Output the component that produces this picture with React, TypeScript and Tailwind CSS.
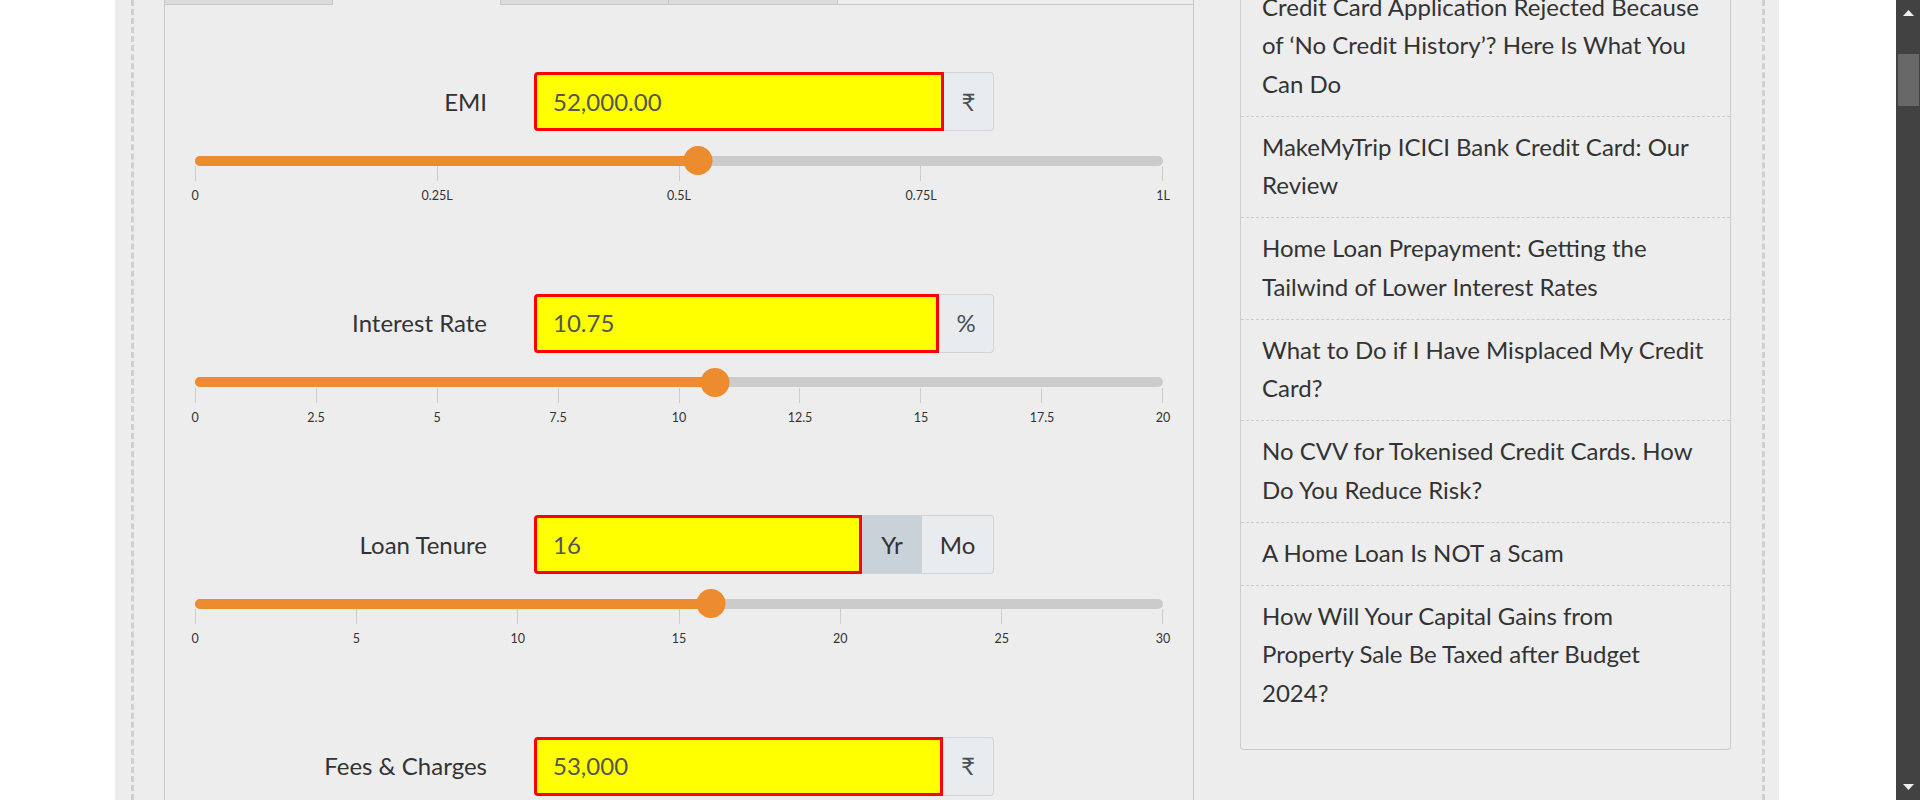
import React from "react";

type Tick = { v: number; label: string };

function Slider({ min, max, value, ticks }: { min: number; max: number; value: number; ticks: Tick[] }) {
  const pct = ((value - min) / (max - min)) * 100;
  return (
    <div className="relative mt-[15px] h-[60px]">
      <div className="absolute left-0 right-0 top-[9.5px] h-[10px] rounded-full bg-[#cbcbcb]" />
      <div className="absolute left-0 top-[9.5px] h-[10px] rounded-full bg-[#ec8c2f]" style={{ width: pct + "%" }} />
      {ticks.map((t) => {
        const p = ((t.v - min) / (max - min)) * 100;
        return (
          <React.Fragment key={t.label}>
            <div
              className="absolute top-[20px] h-[15px] w-px bg-[#cccccc]"
              style={{ left: `calc(${p}% - ${p / 100}px)` }}
            />
            <div
              className="absolute top-[42px] -translate-x-1/2 whitespace-nowrap text-[12.5px] leading-[15px] text-[#333333]"
              style={{ left: p + "%" }}
            >
              {t.label}
            </div>
          </React.Fragment>
        );
      })}
      <div
        className="absolute top-0 h-[29px] w-[29px] -translate-x-1/2 rounded-full bg-[#ec8c2f]"
        style={{ left: pct + "%" }}
      />
    </div>
  );
}

function Row({
  label,
  value,
  addon,
  slider,
}: {
  label: string;
  value: string;
  addon: React.ReactNode;
  slider?: React.ReactNode;
}) {
  return (
    <div className="h-[221.5px]">
      <div className="flex h-[59px] items-center">
        <div className="w-[292px] text-right text-[24px] text-[#333333]">{label}</div>
        <div className="ml-[47px] flex h-full w-[460px]">
          <div className="flex flex-1 items-center rounded-l-[4px] border-[3px] border-[#ff0000] bg-[#ffff00] pl-[16px] text-[24px] text-[#555555]">
            {value}
          </div>
          {addon}
        </div>
      </div>
      {slider}
    </div>
  );
}

function Addon({ text, w }: { text: string; w: string }) {
  return (
    <div
      className={`flex ${w} items-center justify-center rounded-r-[4px] border border-l-0 border-[#ced4da] bg-[#e9ecef] text-[24px] text-[#495057]`}
    >
      {text}
    </div>
  );
}

const articles: string[][] = [
  ["Credit Card Application Rejected Because", "of \u2018No Credit History\u2019? Here Is What You", "Can Do"],
  ["MakeMyTrip ICICI Bank Credit Card: Our", "Review"],
  ["Home Loan Prepayment: Getting the", "Tailwind of Lower Interest Rates"],
  ["What to Do if I Have Misplaced My Credit", "Card?"],
  ["No CVV for Tokenised Credit Cards. How", "Do You Reduce Risk?"],
  ["A Home Loan Is NOT a Scam"],
  ["How Will Your Capital Gains from", "Property Sale Be Taxed after Budget", "2024?"],
];

export default function App() {
  return (
    <div className="flex h-[800px] w-[1920px] overflow-hidden bg-white [font-family:Lato,'Noto_Sans',sans-serif]">
      <div className="ml-[115px] w-[1664px] shrink-0 bg-[#ededed] pl-[16px] pr-[14px]">
        <div className="flex h-full border-x-[3px] border-dashed border-[#d0d0d0] pl-[30px] pr-[31px]">
          {/* Calculator column */}
          <div className="-mt-[40px] w-[1030px] shrink-0">
            <div className="flex h-[45px]">
              <div className="w-[169px] border border-[#c8c8c8] bg-[#dcdcdc]" />
              <div className="w-[167px]" />
              <div className="w-[169px] border border-[#c8c8c8] bg-[#dcdcdc]" />
              <div className="w-[169px] border-y border-r border-[#c8c8c8] bg-[#dcdcdc]" />
              <div className="flex-1 border-b border-r border-[#c8c8c8]" />
            </div>
            <div className="border-x border-[#c8c8c8] bg-[#ededed] px-[30px] pt-[67px]">
              <Row
                label="EMI"
                value="52,000.00"
                addon={<Addon text="₹" w="w-[50px]" />}
                slider={
                  <Slider
                    min={0}
                    max={100000}
                    value={52000}
                    ticks={[
                      { v: 0, label: "0" },
                      { v: 25000, label: "0.25L" },
                      { v: 50000, label: "0.5L" },
                      { v: 75000, label: "0.75L" },
                      { v: 100000, label: "1L" },
                    ]}
                  />
                }
              />
              <Row
                label="Interest Rate"
                value="10.75"
                addon={<Addon text="%" w="w-[55px]" />}
                slider={
                  <Slider
                    min={0}
                    max={20}
                    value={10.75}
                    ticks={[
                      { v: 0, label: "0" },
                      { v: 2.5, label: "2.5" },
                      { v: 5, label: "5" },
                      { v: 7.5, label: "7.5" },
                      { v: 10, label: "10" },
                      { v: 12.5, label: "12.5" },
                      { v: 15, label: "15" },
                      { v: 17.5, label: "17.5" },
                      { v: 20, label: "20" },
                    ]}
                  />
                }
              />
              <Row
                label="Loan Tenure"
                value="16"
                addon={
                  <div className="flex text-[24px] text-[#333333]">
                    <div className="flex w-[60px] items-center justify-center border-y border-[#ced4da] bg-[#c9d1d9]">
                      Yr
                    </div>
                    <div className="flex w-[72px] items-center justify-center rounded-r-[4px] border border-l-0 border-[#ced4da] bg-[#e9ecef]">
                      Mo
                    </div>
                  </div>
                }
                slider={
                  <Slider
                    min={0}
                    max={30}
                    value={16}
                    ticks={[
                      { v: 0, label: "0" },
                      { v: 5, label: "5" },
                      { v: 10, label: "10" },
                      { v: 15, label: "15" },
                      { v: 20, label: "20" },
                      { v: 25, label: "25" },
                      { v: 30, label: "30" },
                    ]}
                  />
                }
              />
              <Row label="Fees & Charges" value="53,000" addon={<Addon text="₹" w="w-[51px]" />} />
            </div>
          </div>

          {/* Sidebar */}
          <div className="-mt-[23px] ml-[46px] w-[491px] shrink-0 self-start">
            <div className="rounded-b-[4px] border-x border-b border-[#cccccc] pb-[24px]">
              {articles.map((lines, i) => (
                <div
                  key={i}
                  className={`whitespace-nowrap pb-[13px] pl-[21px] pr-[10px] pt-[11px] text-[24px] leading-[38.25px] text-[#333333] ${
                    i < articles.length - 1 ? "border-b border-dashed border-[#cccccc]" : ""
                  }`}
                >
                  {lines.map((l, j) => (
                    <React.Fragment key={j}>
                      {j > 0 && <br />}
                      {l}
                    </React.Fragment>
                  ))}
                </div>
              ))}
            </div>
          </div>
        </div>
      </div>

      {/* Scrollbar */}
      <div className="ml-auto flex w-[24px] shrink-0 flex-col items-center bg-[#424242] pb-[10px] pt-[10px]">
        <svg width="11" height="6" viewBox="0 0 11 6">
          <polygon points="5.5,0 11,6 0,6" fill="#f0f0f0" />
        </svg>
        <div className="mt-[38px] h-[52px] w-[21px] bg-[#686868]" />
        <div className="flex-1" />
        <svg width="11" height="6" viewBox="0 0 11 6">
          <polygon points="0,0 11,0 5.5,6" fill="#f0f0f0" />
        </svg>
      </div>
    </div>
  );
}
